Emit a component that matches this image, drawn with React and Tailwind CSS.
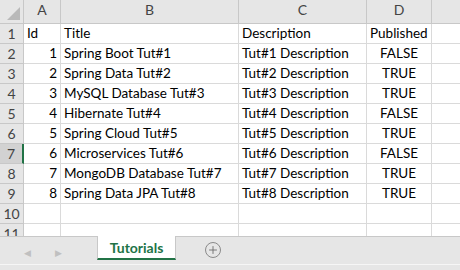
import { Plus } from 'lucide-react';

const rows = [
    ['Id', 'Title', 'Description', 'Published'],
    [1, 'Spring Boot Tut#1', 'Tut#1 Description', 'FALSE'],
    [2, 'Spring Data Tut#2', 'Tut#2 Description', 'TRUE'],
    [3, 'MySQL Database Tut#3', 'Tut#3 Description', 'TRUE'],
    [4, 'Hibernate Tut#4', 'Tut#4 Description', 'FALSE'],
    [5, 'Spring Cloud Tut#5', 'Tut#5 Description', 'TRUE'],
    [6, 'Microservices Tut#6', 'Tut#6 Description', 'FALSE'],
    [7, 'MongoDB Database Tut#7', 'Tut#7 Description', 'TRUE'],
    [8, 'Spring Data JPA Tut#8', 'Tut#8 Description', 'TRUE'],
    ['', '', '', ''],
    ['', '', '', ''],
];

const cols = 'grid grid-cols-[24px_37px_178px_128px_65px_1fr]';
const head = 'h-6 bg-[#e6e6e6] border-r border-b border-[#c8c8c8] flex items-end justify-center pb-[3px] text-[14px] text-[#444]';
const cell = 'h-5 border-r border-b border-[#dadada] flex items-center px-[3px] text-[13.5px] text-black whitespace-nowrap overflow-hidden';

const App = () => {
    return (
        <div className="w-[460px] h-[270px] bg-white overflow-hidden flex flex-col" style={{ fontFamily: 'Lato, "Liberation Sans", sans-serif' }}>
            {/* Sheet */}
            <div className="h-[236px] overflow-hidden">
                <div className={cols}>
                    <div className="h-6 bg-[#e6e6e6] border-r border-b border-[#c8c8c8] relative">
                        <div className="absolute right-[3px] bottom-[3px] w-0 h-0 border-l-[13px] border-l-transparent border-b-[13px] border-b-[#b9b9b9]" />
                    </div>
                    <div className={head}>A</div>
                    <div className={head}>B</div>
                    <div className={head}>C</div>
                    <div className={head}>D</div>
                    <div className="h-6 bg-[#e6e6e6] border-b border-[#c8c8c8]" />
                </div>
                {rows.map((r, i) => (
                    <div key={i} className={cols}>
                        <div className={i === 6
                            ? 'h-5 bg-[#d2d2d2] border-r-2 border-r-[#217346] border-b border-b-[#c8c8c8] flex items-center justify-center text-[14px] text-[#444]'
                            : 'h-5 bg-[#e6e6e6] border-r border-b border-[#c8c8c8] flex items-center justify-center text-[14px] text-[#444]'}>
                            {i + 1}
                        </div>
                        <div className={`${cell} ${i === 0 ? 'justify-start' : 'justify-end'}`}>{r[0]}</div>
                        <div className={cell}>{r[1]}</div>
                        <div className={cell}>{r[2]}</div>
                        <div className={`${cell} ${i === 0 ? 'justify-start' : 'justify-center'}`}>{r[3]}</div>
                        <div className="h-5 border-b border-[#dadada]" />
                    </div>
                ))}
            </div>

            {/* Tab bar */}
            <div className="flex-1 bg-[#e6e6e6] border-t border-[#c8c8c8] flex items-start relative">
                <div className="flex items-center gap-[24px] pl-[24px] pt-[9px] text-[#c0c0c0] text-[9px]">
                    <span>◀</span>
                    <span>▶</span>
                </div>
                <div className="ml-[35px] -mt-px w-[79px] h-[24px] bg-white border-x border-[#c8c8c8] border-b-2 border-b-[#217346] flex items-center justify-center text-[14px] font-bold text-[#217346]">
                    Tutorials
                </div>
                <div className="ml-[29px] mt-[5px] w-[16px] h-[16px] rounded-full border border-[#8a8a8a] flex items-center justify-center text-[#6a6a6a]">
                    <Plus size={12} strokeWidth={1.75} />
                </div>
                <div className="absolute left-0 right-0 bottom-[5px] h-px bg-[#f6f6f6]" />
            </div>
        </div>
    );
};

export default App;
